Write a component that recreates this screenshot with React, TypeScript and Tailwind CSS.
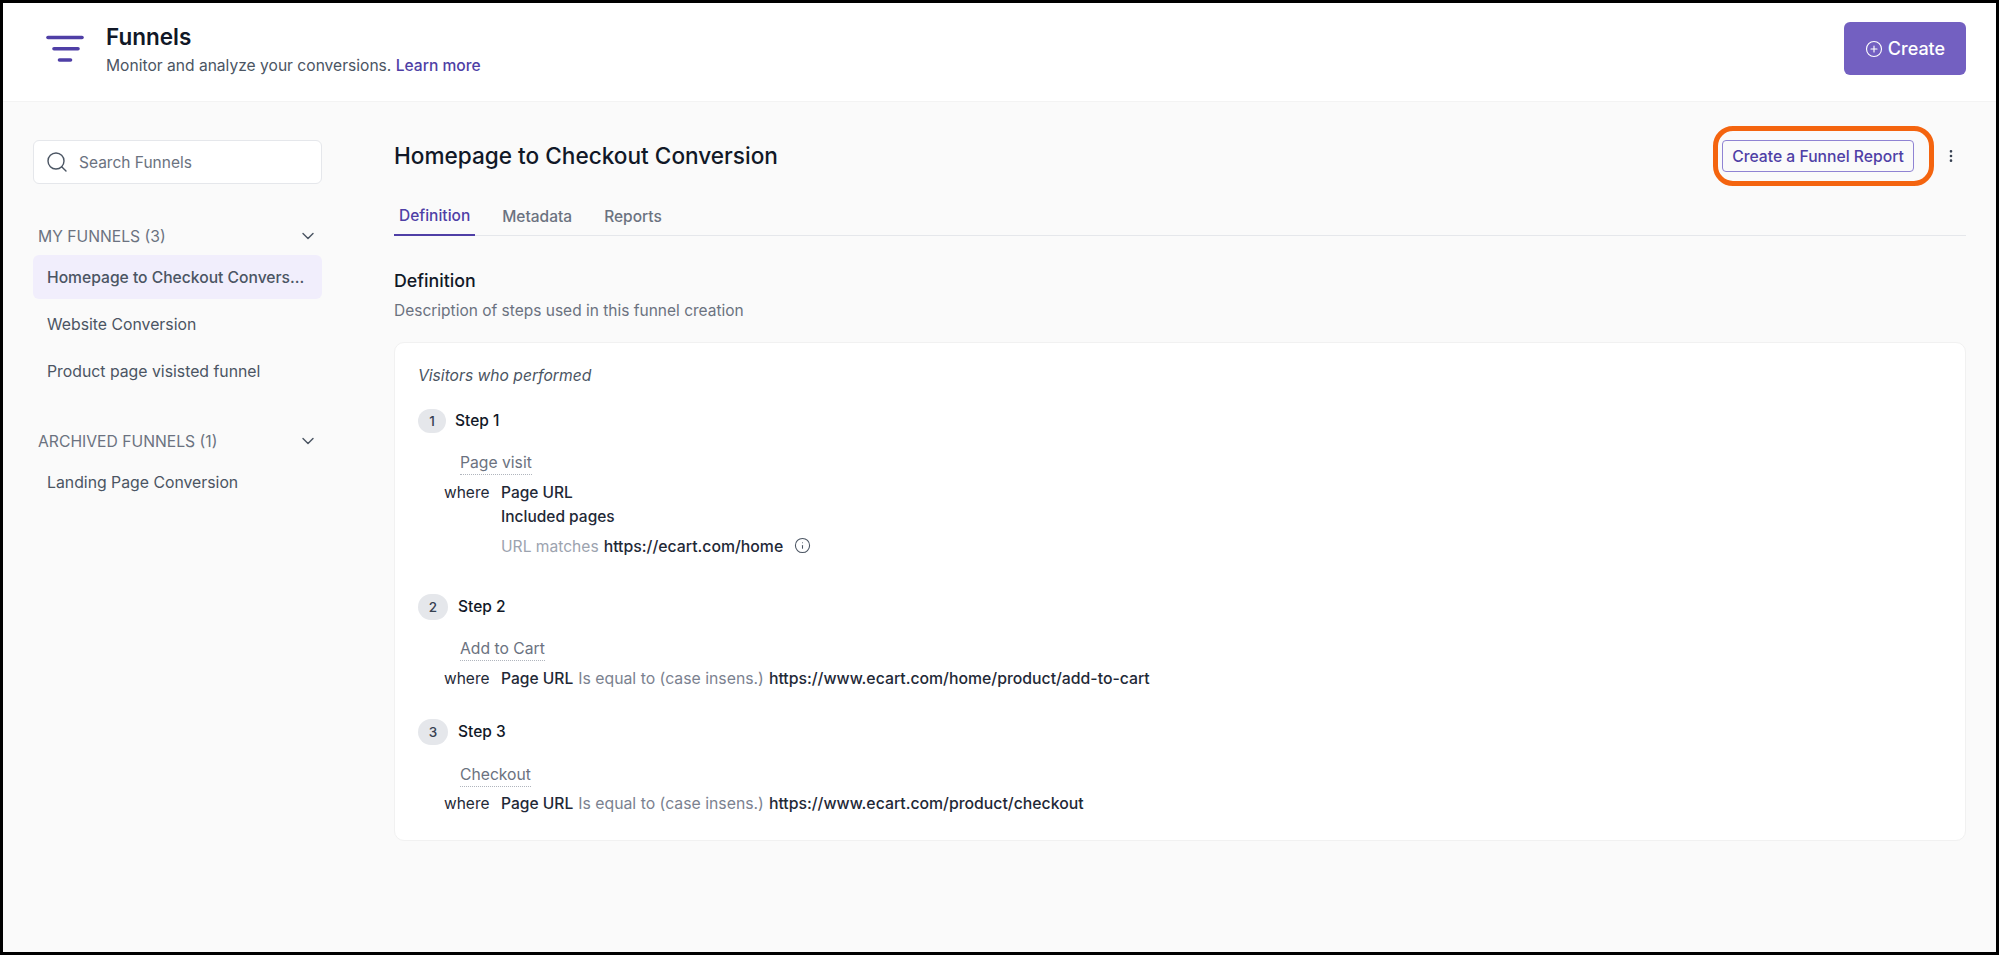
import { ChevronDown, CirclePlus, EllipsisVertical, Info, Search } from "lucide-react";

function FunnelIcon() {
  return (
    <svg width="38" height="28" viewBox="0 0 38 28" fill="none" stroke="#4f3fa6" strokeWidth="3.6" strokeLinecap="round">
      <path d="M2 3.500h34" />
      <path d="M8 14.700h24" />
      <path d="M13.500 26h11" />
    </svg>
  );
}

function SideSection({ label, mt, items }: { label: string; mt: string; items: { name: string; active?: boolean }[] }) {
  return (
    <div className={mt}>
      <div className="flex h-[24px] items-center justify-between pl-[5px] pr-[4px] text-[15.700px] text-[#6b7280]">
        <span className="pt-[1px]">{label}</span>
        <ChevronDown size={20} strokeWidth={1.7} className="text-[#4b5563]" />
      </div>
      <ul className="mt-[7px]">
        {items.map((item) => (
          <li
            key={item.name}
            className={`flex h-[44px] items-center rounded-[6px] pl-[14px] pt-[1px] ${
              item.active
                ? "bg-[#f1eefc] text-[15.650px] font-medium text-[#4b5563]"
                : "mt-[3px] text-[15.800px] text-[#4b5563] first:mt-0"
            }`}
          >
            {item.name}
          </li>
        ))}
      </ul>
    </div>
  );
}

function StepHead({ n, mt, badge, gap }: { n: number; mt: string; badge: string; gap: string }) {
  return (
    <div className={`flex items-center ${mt}`}>
      <span className={`flex items-center justify-center rounded-full bg-[#e5e7eb] text-[13.500px] font-medium text-[#374151] ${badge}`}>{n}</span>
      <span className={`text-[15.500px] font-medium text-[#111827] ${gap}`}>Step {n}</span>
    </div>
  );
}

function EventName({ name, mt }: { name: string; mt: string }) {
  return (
    <div className={`flex ${mt}`}>
      <span className="ml-[42px] border-b border-dotted border-[#b0b5bd] text-[15.700px] leading-[23px] text-[#6b7280]">{name}</span>
    </div>
  );
}

function WhereRow({ url, mt }: { url: string; mt: string }) {
  return (
    <div className={`ml-[26px] flex text-[15.800px] leading-[22px] ${mt}`}>
      <span className="w-[57px] text-[15.500px] text-[#1f2937]">where</span>
      <span className="text-[15.600px] font-medium text-[#1f2937]">Page URL</span>
      <span className="ml-[5px] text-[#7b8290]">Is equal to (case insens.)</span>
      <span className="ml-[5px] font-medium text-[#1f2937]">{url}</span>
    </div>
  );
}

export default function App() {
  return (
    <div className="flex h-[955px] w-full flex-col border-[3px] border-black bg-[#fafafa] font-['Inter',sans-serif]">
      <header className="flex h-[99px] shrink-0 items-start justify-between border-b border-[#f3f3f3] bg-white pl-[43px] pr-[30px] pt-[19px]">
        <div className="flex items-start">
          <div className="mt-[12px]">
            <FunnelIcon />
          </div>
          <div className="ml-[22px]">
            <h1 className="text-[22.500px] font-semibold leading-[30px] text-[#111827]">Funnels</h1>
            <p className="mt-[3px] text-[15.600px] leading-[22px] text-[#4b5563]">
              Monitor and analyze your conversions.{" "}
              <a className="font-medium text-[#4f3fa6]">Learn more</a>
            </p>
          </div>
        </div>
        <button className="flex h-[53px] w-[122px] items-center justify-center gap-[5px] rounded-[6px] bg-[#7360c1] text-[18px] font-medium text-white">
          <CirclePlus size={18} strokeWidth={1.5} />
          Create
        </button>
      </header>

      <div className="flex min-h-0 flex-1 pl-[30px] pr-[30px]">
        <aside className="w-[289px] shrink-0 pt-[38px]">
          <div className="flex h-[44px] items-center rounded-[6px] border border-[#e5e7eb] bg-white pl-[11px]">
            <Search size={24} strokeWidth={1.4} className="text-[#4b5563]" />
            <span className="ml-[10px] pt-[1px] text-[15.500px] text-[#6b7280]">Search Funnels</span>
          </div>
          <SideSection
            label="MY FUNNELS (3)"
            mt="mt-[40px]"
            items={[
              { name: "Homepage to Checkout Convers...", active: true },
              { name: "Website Conversion" },
              { name: "Product page visisted funnel" },
            ]}
          />
          <SideSection label="ARCHIVED FUNNELS (1)" mt="mt-[36px]" items={[{ name: "Landing Page Conversion" }]} />
        </aside>

        <main className="ml-[72px] flex min-w-0 flex-1 flex-col">
          <div className="flex items-center justify-between pt-[24px]">
            <h2 className="text-[22.600px] font-medium leading-[30px] text-[#111827]">Homepage to Checkout Conversion</h2>
            <div className="flex items-center">
              <div className="rounded-[20px] border-[5px] border-[#f4640f] py-[9px] pl-[4px] pr-[15px]">
                <button className="flex h-[32px] w-[192px] items-center justify-center rounded-[4px] border border-[#8f83d3] pt-[1px] text-[15.700px] font-medium text-[#4f3fa6]">
                  Create a Funnel Report
                </button>
              </div>
              <EllipsisVertical size={16} className="ml-[9px] mr-[7px] text-[#374151]" />
            </div>
          </div>

          <nav className="flex h-[50px] items-stretch gap-[22px] border-b border-[#e5e7eb] text-[15.500px] font-medium text-[#6b7280]">
            <a className="-mb-px flex items-center border-b-2 border-[#4f3fa6] px-[5px] pt-[12px] text-[#4f3fa6]">Definition</a>
            <a className="flex items-center px-[5px] pt-[12px]">Metadata</a>
            <a className="flex items-center px-[5px] pt-[12px]">Reports</a>
          </nav>

          <section className="mt-[32px]">
            <h3 className="text-[17.800px] font-medium leading-[26px] text-[#111827]">Definition</h3>
            <p className="mt-[6px] text-[15.500px] leading-[22px] text-[#6b7280]">Description of steps used in this funnel creation</p>
          </section>

          <div className="mt-[20px] h-[499px] rounded-[10px] border border-[#f1f1f1] bg-white pl-[23px] pt-[22px]">
            <p className="text-[15.650px] italic leading-[22px] text-[#4b5563]">Visitors who performed</p>

            <StepHead n={1} mt="mt-[22px]" badge="h-[24px] w-[28px]" gap="ml-[9px]" />
            <EventName name="Page visit" mt="mt-[18px]" />
            <div className="ml-[26px] mt-[7px] flex text-[15.500px] leading-[22px] text-[#1f2937]">
              <span className="w-[57px]">where</span>
              <div>
                <div className="font-medium">Page URL</div>
                <div className="mt-[2px] font-medium">Included pages</div>
                <div className="mt-[8px] flex items-center">
                  <span className="text-[15.600px] text-[#9ca3af]">URL matches</span>
                  <span className="ml-[5px] text-[15.800px] font-medium">https://ecart.com/home</span>
                  <Info size={17} strokeWidth={1.5} className="-mt-[3px] ml-[11px] text-[#4b5563]" />
                </div>
              </div>
            </div>

            <StepHead n={2} mt="mt-[36px]" badge="h-[26px] w-[30px]" gap="ml-[10px]" />
            <EventName name="Add to Cart" mt="mt-[17px]" />
            <WhereRow url="https://www.ecart.com/home/product/add-to-cart" mt="mt-[7px]" />

            <StepHead n={3} mt="mt-[29px]" badge="h-[26px] w-[30px]" gap="ml-[10px]" />
            <EventName name="Checkout" mt="mt-[18px]" />
            <WhereRow url="https://www.ecart.com/product/checkout" mt="mt-[6px]" />
          </div>
        </main>
      </div>
    </div>
  );
}
